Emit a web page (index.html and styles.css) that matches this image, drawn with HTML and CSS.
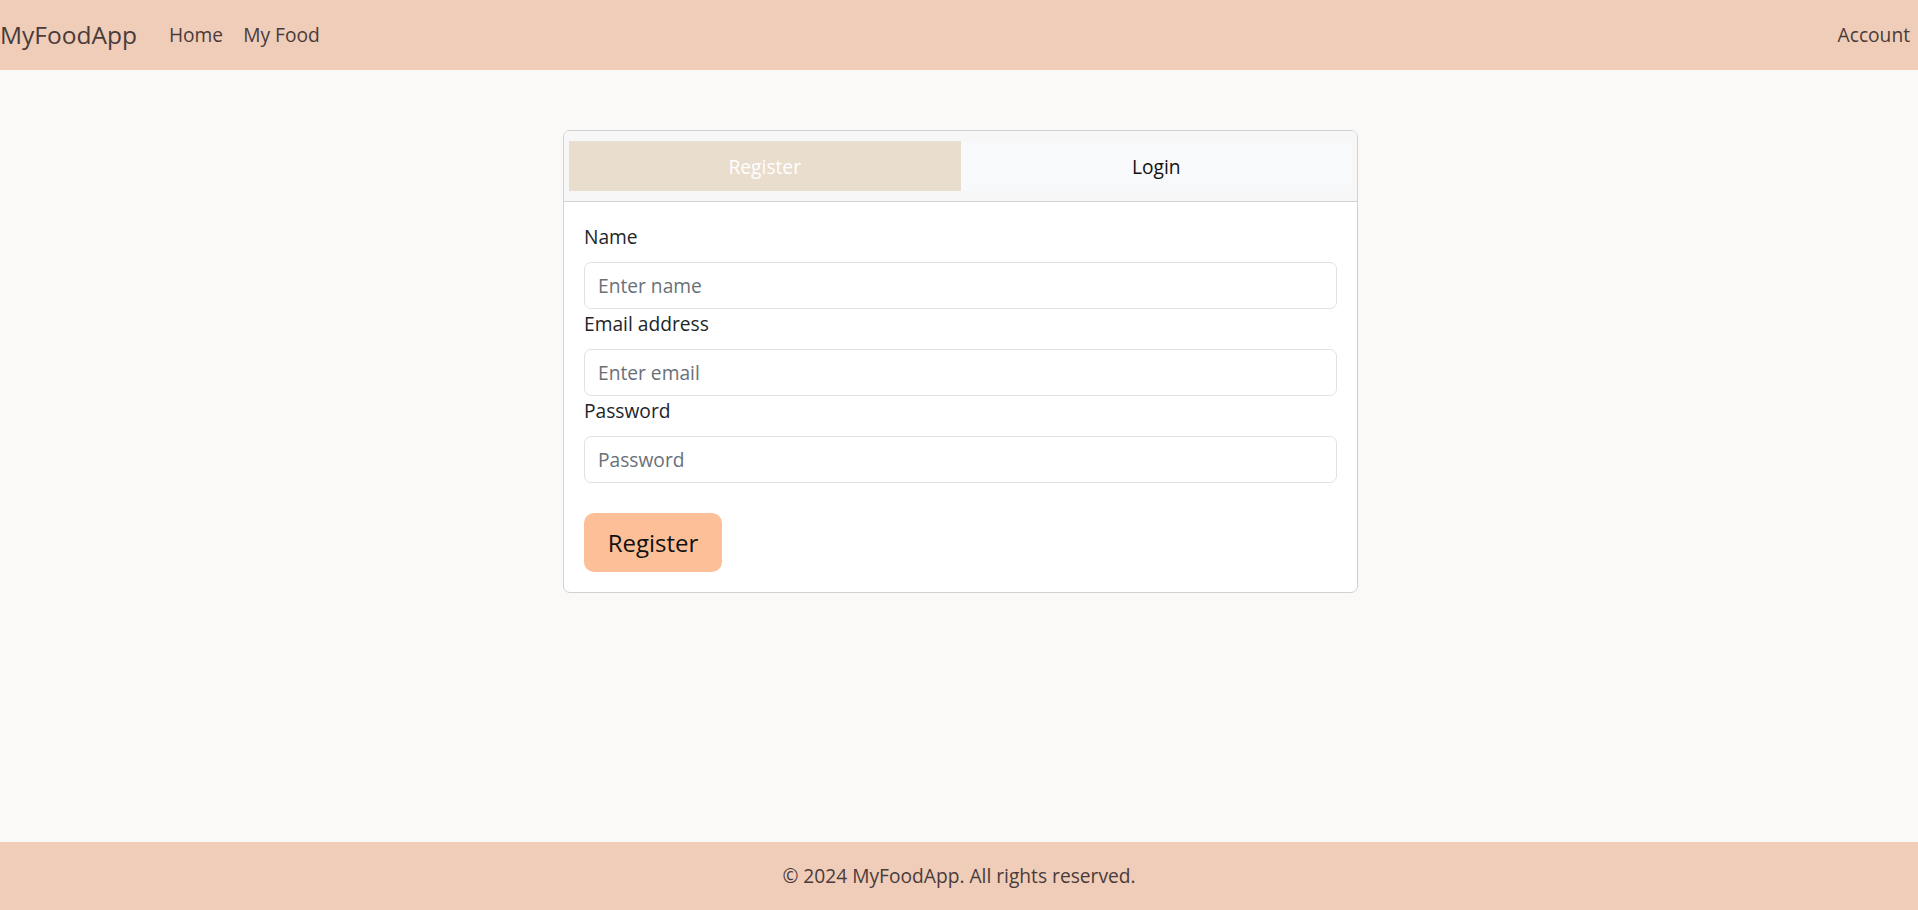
FILE: index.html
```html
<!DOCTYPE html>
<html lang="en">
<head>
<meta charset="utf-8">
<title>MyFoodApp</title>
<link rel="stylesheet" href="styles.css">
</head>
<body>
<header class="navbar">
  <div class="nav-left">
    <a class="brand" href="#">MyFoodApp</a>
    <a class="nav-link" href="#">Home</a>
    <a class="nav-link" href="#">My Food</a>
  </div>
  <a class="nav-link account" href="#">Account</a>
</header>
<main class="main">
  <div class="card">
    <div class="card-header">
      <button class="tab tab-active" type="button">Register</button>
      <button class="tab" type="button">Login</button>
    </div>
    <form class="card-body">
      <label class="form-label" for="name">Name</label>
      <input class="form-control" id="name" type="text" placeholder="Enter name">
      <label class="form-label" for="email">Email address</label>
      <input class="form-control" id="email" type="email" placeholder="Enter email">
      <label class="form-label" for="password">Password</label>
      <input class="form-control" id="password" type="password" placeholder="Password">
      <div class="actions">
        <button class="btn-submit" type="button">Register</button>
      </div>
    </form>
  </div>
</main>
<footer class="footer">© 2024 MyFoodApp. All rights reserved.</footer>
</body>
</html>
```
FILE: styles.css
```css
* { box-sizing: border-box; }
html, body { margin: 0; padding: 0; }
body {
  font-family: "Open Sans", "Noto Sans", sans-serif;
  font-size: 19.2px;
  line-height: 1.5;
  color: #212529;
  background: #faf9f7;
  min-height: 910px;
  display: flex;
  flex-direction: column;
}
.navbar {
  height: 70px;
  background: #efcdb8;
  display: flex;
  align-items: center;
  justify-content: space-between;
  padding: 0 8px 0 0;
}
.nav-left { display: flex; align-items: center; }
.brand {
  font-size: 24.5px;
  color: #4a3b3b;
  text-decoration: none;
  margin-right: 22px;
}
.nav-link {
  color: #4a3b3b;
  text-decoration: none;
  padding: 0 10px;
  font-size: 19.2px;
}
.account { padding-right: 0; }
.main {
  flex: 1;
  display: flex;
  justify-content: center;
  align-items: flex-start;
  padding: 60px 0 0 3px;
}
.card {
  width: 795px;
  background: #fff;
  border: 1px solid #d3d1cf;
  border-radius: 7px;
  overflow: hidden;
}
.card-header {
  display: flex;
  padding: 10px 5px;
  background: #f7f7f7;
  border-bottom: 1px solid #d3d1cf;
}
.tab {
  flex: 1;
  height: 50px;
  border: 0;
  font-family: inherit;
  font-size: 19.2px;
  background: #f8f9fa;
  color: #111;
  cursor: pointer;
}
.tab-active { background: #e9ddce; color: #fff; }
.card-body {
  display: flex;
  flex-direction: column;
  padding: 20px 20px 20px;
}
.form-label {
  line-height: 30px;
  margin-bottom: 10px;
}
.form-control {
  height: 47px;
  padding: 0 13px;
  font-family: inherit;
  font-size: 19.2px;
  color: #212529;
  background: #fff;
  border: 1px solid #dee2e6;
  border-radius: 7px;
}
.form-control::placeholder { color: #6a7077; }
.actions { margin-top: 30px; }
.btn-submit {
  height: 59px;
  width: 138px;
  border: 0;
  border-radius: 10px;
  background: #fdbf98;
  color: #111;
  font-family: inherit;
  font-size: 24px;
  cursor: pointer;
}
.footer {
  height: 68px;
  background: #efcdb8;
  color: #4a3b3b;
  display: flex;
  align-items: center;
  justify-content: center;
  font-size: 19.2px;
}
```
